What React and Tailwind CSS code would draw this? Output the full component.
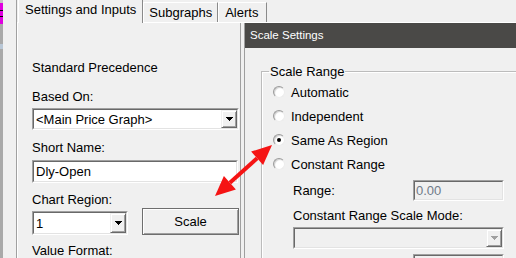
import React from "react";

const font = "font-['Liberation_Sans',Arial,sans-serif]";

function Sunken({ className = "", inner = "bg-white", children }) {
  return (
    <div className={`border border-t-[#a0a0a0] border-l-[#a0a0a0] border-b-white border-r-white ${className}`}>
      <div className={`h-full flex items-center border border-t-[#696969] border-l-[#696969] border-b-[#e3e3e3] border-r-[#e3e3e3] ${inner}`}>
        {children}
      </div>
    </div>
  );
}

function DropBtn({ disabled }) {
  return (
    <div className="h-full w-[16px] shrink-0 flex items-center justify-center bg-[#f0f0f0] border border-t-[#f0f0f0] border-l-[#f0f0f0] border-b-[#696969] border-r-[#696969] shadow-[inset_1px_1px_0_#fff,inset_-1px_-1px_0_#a0a0a0]">
      <svg width="7" height="4" shapeRendering="crispEdges">
        <path d="M0 0h7L3.5 4z" fill={disabled ? "#a0a0a0" : "#000"} />
      </svg>
    </div>
  );
}

function Dropdown({ className, text, disabled }) {
  return (
    <Sunken className={className} inner={disabled ? "bg-[#f0f0f0]" : "bg-white"}>
      <span className="flex-1 pl-[2px] whitespace-nowrap">{text}</span>
      <DropBtn disabled={disabled} />
    </Sunken>
  );
}

function Radio({ label, checked }) {
  return (
    <div className="h-[24px] flex items-center pl-[11px]">
      <div className="w-[12px] h-[12px] rounded-full bg-white border border-t-[#9a9a9a] border-l-[#9a9a9a] border-b-[#ececec] border-r-[#ececec] shadow-[inset_1px_1px_1px_#d0d0d0] flex items-center justify-center">
        {checked && <div className="w-[4px] h-[4px] rounded-full bg-black" />}
      </div>
      <span className="ml-[6px]">{label}</span>
    </div>
  );
}

function Strip() {
  return (
    <div className="w-[3px] flex flex-col bg-[#a9a9a9]">
      <div className="h-[3px] bg-[#c4c4c4]" />
      <div className="h-[7px] bg-[#e000e0]" />
      <div className="h-[1px] bg-black" />
      <div className="h-[5px] bg-[#e000e0]" />
      <div className="h-[1px] bg-black" />
      <div className="h-[7px] bg-[#e000e0]" />
      <div className="h-[20px]" />
      <div className="h-[5px] bg-[#b9c7d6]" />
    </div>
  );
}

function Tab({ label, active, className = "px-[5px]" }) {
  if (active) {
    return (
      <div className="relative z-10 h-[23px] -mb-[1px] px-[6px] pt-[2px] bg-[#f0f0f0] border-l border-l-white border-r border-r-[#8a8a8a]">
        {label}
      </div>
    );
  }
  return (
    <div className={`h-[20px] pt-[2px] bg-[#f0f0f0] border-t border-t-white border-l border-l-white border-r border-r-[#8a8a8a] ${className}`}>
      {label}
    </div>
  );
}

function ScaleDialog() {
  return (
    <div className="absolute left-[244px] top-[23px] w-[290px] h-[250px] bg-[#f0f0f0] border-l border-l-[#9e9e9e]">
      <div className="h-[25px] bg-[#4a4947] text-white text-[11.5px] flex items-center pl-[5px]">
        Scale Settings
      </div>
      <div className="pl-[16px] pt-[16px]">
        <fieldset className="w-[300px] h-[220px] border border-[#bcbcbc] shadow-[inset_1px_1px_0_#fff]">
          <legend className="ml-[7px] px-[1px] leading-[15px]">Scale Range</legend>
          <div className="pt-[1px]">
            <Radio label="Automatic" />
            <Radio label="Independent" />
            <Radio label="Same As Region" checked />
            <Radio label="Constant Range" />
            <div className="mt-[4px] h-[21px] flex items-center pl-[31px]">
              <span className="w-[120px]">Range:</span>
              <Sunken className="w-[91px] h-[21px]" inner="bg-[#f0f0f0]">
                <span className="pl-[1px] text-[#6f7a88]">0.00</span>
              </Sunken>
            </div>
            <div className="mt-[7px] pl-[31px]">Constant Range Scale Mode:</div>
            <Dropdown className="mt-[4px] ml-[31px] w-[211px] h-[22px]" text="" disabled />
            <Sunken className="mt-[5px] ml-[151px] w-[91px] h-[21px]" inner="bg-[#f0f0f0]" />
          </div>
        </fieldset>
      </div>
    </div>
  );
}

function RedArrow() {
  return (
    <svg className="absolute left-0 top-0 pointer-events-none" width="516" height="258">
      <line x1="229.9" y1="182.7" x2="257.1" y2="158.3" stroke="#f51414" strokeWidth="4" />
      <polygon points="272,145 263.1,165 251.1,151.6" fill="#f51414" />
      <polygon points="215,196 223.9,176 235.9,189.4" fill="#f51414" />
    </svg>
  );
}

export default function App() {
  return (
    <div className={`relative w-[516px] h-[258px] overflow-hidden bg-[#f0f0f0] text-black text-[13px] leading-[15px] ${font} flex`}>
      <Strip />
      <div className="w-[13px]" />
      <div className="flex-1 flex flex-col border-l border-l-[#a0a0a0]">
        <div className="h-[22px] flex items-end pl-[1px]">
          <Tab label="Settings and Inputs" active />
          <Tab label="Subgraphs" />
          <Tab label="Alerts" className="pl-[6px] pr-[8px]" />
        </div>
        <div className="flex-1 border-t border-t-white">
          <div className="w-[224px] h-full border-l border-l-white border-r border-r-[#a0a0a0] pl-[14px] pt-[37px]">
            <div>Standard Precedence</div>
            <div className="mt-[14px]">Based On:</div>
            <Dropdown className="mt-[4px] w-[207px] h-[22px]" text="<Main Price Graph>" />
            <div className="mt-[10px]">Short Name:</div>
            <Sunken className="mt-[5px] w-[206px] h-[23px]">
              <span className="pl-[2px]">Dly-Open</span>
            </Sunken>
            <div className="mt-[9px]">Chart Region:</div>
            <div className="mt-[1px] h-[27px] flex items-end">
              <Dropdown className="w-[96px] h-[24px]" text="1" />
              <button className="ml-[14px] w-[97px] h-[27px] bg-[#f0f0f0] border border-[#6e6e6e] shadow-[inset_1px_1px_0_#fff,inset_-1px_-1px_0_#a0a0a0]">
                Scale
              </button>
            </div>
            <div className="mt-[8px]">Value Format:</div>
          </div>
        </div>
      </div>
      <ScaleDialog />
      <RedArrow />
    </div>
  );
}
